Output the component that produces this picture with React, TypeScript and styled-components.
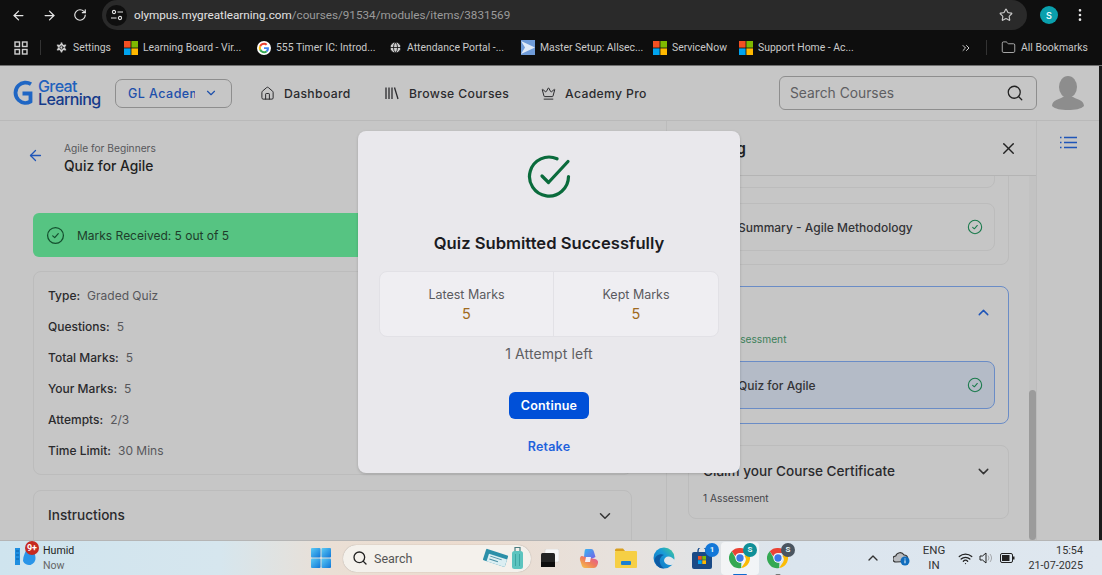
import React from "react";
import styled, { createGlobalStyle } from "styled-components";
import {
  ArrowLeft,
  ArrowRight,
  RotateCw,
  Star,
  Settings,
  Globe,
  ChevronsRight,
  Folder,
  ChevronDown,
  ChevronUp,
  Home,
  Crown,
  Search,
  X,
  Wifi,
  EllipsisVertical,
} from "lucide-react";

const GlobalStyle = createGlobalStyle`
  html, body { margin: 0; padding: 0; width: 1102px; height: 575px; overflow: hidden; background: #0f0f0f; }
  * { box-sizing: border-box; }
  svg { flex: none; }
`;

const Page = styled.div`
  width: 1102px;
  height: 575px;
  display: flex;
  flex-direction: column;
  overflow: hidden;
  font-family: Inter, "Liberation Sans", sans-serif;
`;

/* browser chrome */
const Toolbar = styled.div`
  height: 30px;
  background: #0f0f0f;
  display: flex;
  align-items: center;
  color: #e6e6e6;
  flex: none;
`;

const NavButtons = styled.div`
  width: 102px;
  flex: none;
  display: flex;
  align-items: center;
  gap: 16px;
  padding-left: 11px;
`;

const AddressBar = styled.div`
  width: 925px;
  height: 30px;
  border-radius: 15px;
  background: #2a2a2a;
  display: flex;
  align-items: center;
  padding: 0 14px 0 4px;
  flex: none;
`;

const SiteInfo = styled.div`
  width: 21px;
  height: 21px;
  border-radius: 50%;
  background: #0f0f0f;
  display: flex;
  align-items: center;
  justify-content: center;
  margin-right: 7px;
  flex: none;
`;

const Url = styled.div`
  font-family: Roboto, sans-serif;
  font-size: 11.7px;
  color: #9b9b9b;
  flex: 1;
  white-space: nowrap;
  span { color: #e3e3e3; }
`;

const ProfileDot = styled.div`
  width: 18px;
  height: 18px;
  border-radius: 50%;
  background: #0aa0ad;
  color: #e8fbff;
  font-size: 9px;
  font-weight: 600;
  display: flex;
  align-items: center;
  justify-content: center;
  margin-left: 13px;
  margin-right: 14px;
  flex: none;
`;

const Bookmarks = styled.div`
  height: 36px;
  background: #0e0e0e;
  border-bottom: 1px solid #6f6f6f;
  display: flex;
  align-items: center;
  padding-left: 14px;
  font-family: Roboto, sans-serif;
  font-size: 10.4px;
  color: #c9c9c9;
  white-space: nowrap;
  flex: none;
`;

const Divider = styled.div<{ $left: number; $right: number }>`
  width: 1px;
  height: 15px;
  background: #333;
  margin: 0 ${(p) => p.$right}px 0 ${(p) => p.$left}px;
  flex: none;
`;

const Bookmark = styled.div<{ $width: number }>`
  width: ${(p) => p.$width}px;
  flex: none;
  display: flex;
  align-items: center;
  gap: 5px;
`;

/* site */
const Site = styled.div`
  flex: 1;
  min-height: 0;
  display: flex;
  flex-direction: column;
  background: #c6c6c6;
  border-right: 3px solid #1b1b1b;
  color: #242427;
`;

const SiteHeader = styled.header`
  height: 55px;
  flex: none;
  border-bottom: 1px solid #b9b9b9;
  display: flex;
  align-items: center;
  padding-left: 12px;
`;

const Logo = styled.div`
  width: 103px;
  flex: none;
  display: flex;
  align-items: center;
  gap: 2px;
`;

const LogoText = styled.div`
  color: #1f62bd;
  font-size: 16px;
  font-weight: 500;
  line-height: 12px;
  letter-spacing: -0.6px;
  margin-top: -1px;
  span { display: block; color: #153a8a; margin-top: 1px; }
`;

const AcademySelect = styled.div`
  width: 117px;
  height: 29px;
  flex: none;
  border: 1px solid #8e8e8e;
  border-radius: 7px;
  display: flex;
  align-items: center;
  padding-left: 12px;
  color: #1e50ab;
  font-size: 12.5px;
  font-weight: 500;
  letter-spacing: 0.45px;
  margin-right: 28px;
`;

const AcademyLabel = styled.div`
  width: 67px;
  overflow: hidden;
  white-space: nowrap;
  margin-right: 9px;
`;

const NavLink = styled.div<{ $gap: number; $width: number }>`
  display: flex;
  align-items: center;
  gap: ${(p) => p.$gap}px;
  width: ${(p) => p.$width}px;
  flex: none;
  font-size: 12.2px;
  font-weight: 500;
  letter-spacing: 0.35px;
  color: #2b2b2e;
  white-space: nowrap;
`;

const SearchBox = styled.div`
  width: 258px;
  height: 34px;
  flex: none;
  margin-left: 118px;
  border: 1px solid #8e8e8e;
  border-radius: 6px;
  display: flex;
  align-items: center;
  justify-content: space-between;
  padding: 0 12px 0 10px;
  font-size: 13.8px;
  color: #5e5e62;
`;

const AvatarWrap = styled.div`
  margin-left: 15px;
  display: flex;
`;

const Content = styled.div`
  flex: 1;
  min-height: 0;
  display: flex;
  position: relative;
  overflow: hidden;
`;

const MainColumn = styled.main`
  width: 667px;
  flex: none;
  border-right: 1px solid #bcbcbc;
  padding: 0 34px 0 33px;
  display: flex;
  flex-direction: column;
  overflow: hidden;
`;

const PageHead = styled.div`
  height: 92px;
  flex: none;
  display: flex;
  padding-top: 20px;
`;

const BackSlot = styled.div`
  width: 31px;
  flex: none;
  padding-top: 6px;
  display: flex;
  justify-content: flex-start;
  align-items: flex-start;
  margin-left: -6px;
  margin-right: 6px;
`;

const Crumb = styled.div`
  font-size: 10.2px;
  line-height: 14px;
  color: #57575b;
`;

const PageTitle = styled.h1`
  margin: 2px 0 0;
  font-size: 13.8px;
  line-height: 19px;
  font-weight: 500;
  color: #1f1f22;
`;

const ResultBar = styled.div`
  height: 44px;
  flex: none;
  border-radius: 6px;
  background: #56c482;
  display: flex;
  align-items: center;
  gap: 12px;
  padding-left: 13px;
  font-size: 12px;
  color: #1e3d2b;
`;

const InfoCard = styled.section`
  margin-top: 14px;
  height: 204px;
  flex: none;
  border: 1px solid #bcbcbc;
  border-radius: 8px;
  padding: 8px 14px;
  display: flex;
  flex-direction: column;
`;

const InfoRow = styled.div`
  height: 31px;
  flex: none;
  display: flex;
  align-items: center;
  gap: 7px;
  font-size: 12px;
  color: #57575b;
  b { font-weight: 500; color: #2a2a2d; }
`;

const InstructionsCard = styled.section`
  margin-top: 15px;
  height: 70px;
  flex: none;
  border: 1px solid #bcbcbc;
  border-radius: 8px;
  padding: 16px 17px 0 14px;
  display: flex;
  justify-content: space-between;
  align-items: flex-start;
  font-size: 13.6px;
  font-weight: 500;
  color: #2a2a2d;
`;

const Panel = styled.aside`
  width: 370px;
  flex: none;
  display: flex;
  flex-direction: column;
  border-right: 1px solid #bcbcbc;
`;

const PanelHead = styled.div`
  height: 55px;
  flex: none;
  border-bottom: 1px solid #b4b4b4;
  display: flex;
  align-items: center;
  justify-content: space-between;
  padding: 0 18px 0 15px;
  font-size: 15px;
  font-weight: 600;
  color: #1f1f22;
`;

const PanelBody = styled.div`
  flex: 1;
  min-height: 0;
  display: flex;
  overflow: hidden;
`;

const ModuleList = styled.div`
  flex: 1;
  padding: 0 20px 0 21px;
  display: flex;
  flex-direction: column;
  gap: 21px;
  margin-top: -37px;
`;

const ModuleCard = styled.div<{ $active?: boolean }>`
  flex: none;
  border: 1px solid ${(p) => (p.$active ? "#6a8cc6" : "#bcbcbc")};
  border-radius: 8px;
  padding: 0 13px ${(p) => (p.$active ? "14px" : "13px")} 14px;
  display: flex;
  flex-direction: column;
  gap: 15px;
`;

const ModuleHead = styled.div`
  display: flex;
  flex-direction: column;
  padding-top: 15px;
  gap: 10px;
`;

const ModuleTitleRow = styled.div`
  display: flex;
  justify-content: space-between;
  align-items: center;
  height: 20px;
  font-size: 13.6px;
  font-weight: 500;
  color: #2a2a2d;
  padding-right: 3px;
`;

const ModuleNote = styled.div<{ $green?: boolean }>`
  font-size: 10.2px;
  line-height: 14px;
  color: ${(p) => (p.$green ? "#3c8059" : "#45454a")};
`;

const Lesson = styled.div<{ $active?: boolean }>`
  height: 48px;
  flex: none;
  border: 1px solid ${(p) => (p.$active ? "#6a8cc6" : "#bcbcbc")};
  background: ${(p) => (p.$active ? "#b4bbc7" : "transparent")};
  border-radius: 8px;
  display: flex;
  align-items: center;
  justify-content: space-between;
  padding: 0 11px 0 34px;
  font-size: 12px;
  font-weight: 500;
  color: #333336;
`;

const ScrollTrack = styled.div`
  width: 7px;
  flex: none;
  background: #c2c2c2;
  display: flex;
  flex-direction: column;
  justify-content: flex-end;
`;

const ScrollThumb = styled.div`
  height: 150px;
  border-radius: 4px;
  background: #9b9b9b;
`;

const Rail = styled.div`
  flex: 1;
  display: flex;
  justify-content: center;
  padding-top: 15px;
  align-items: flex-start;
`;

/* modal */
const Modal = styled.div`
  position: absolute;
  left: 358px;
  top: 10px;
  width: 382px;
  height: 342px;
  border-radius: 8px;
  background: #e9e8ec;
  box-shadow: 0 1px 3px rgba(0, 0, 0, 0.18);
  display: flex;
  flex-direction: column;
  align-items: center;
  padding: 24px 21px 0;
`;

const ModalTitle = styled.h2`
  margin: 32px 0 0;
  font-size: 16.6px;
  line-height: 24px;
  font-weight: 600;
  color: #1b1b1f;
`;

const StatsBox = styled.div`
  margin-top: 16px;
  width: 340px;
  height: 66px;
  flex: none;
  background: #efeef2;
  border: 1px solid #e2e1e6;
  border-radius: 8px;
  display: grid;
  grid-template-columns: 174px 1fr;
`;

const Stat = styled.div<{ $divided?: boolean }>`
  display: flex;
  flex-direction: column;
  align-items: center;
  justify-content: center;
  gap: 2px;
  border-right: ${(p) => (p.$divided ? "1px solid #e2e1e6" : "none")};
  font-size: 12.5px;
  line-height: 16px;
  color: #5a5a5e;
  b { font-weight: 400; font-size: 14.5px; line-height: 17px; color: #a06a20; }
`;

const AttemptsLeft = styled.div`
  margin-top: 7px;
  font-size: 14px;
  line-height: 20px;
  letter-spacing: 0.1px;
  color: #5e5e62;
`;

const ContinueButton = styled.button`
  margin-top: 28px;
  width: 80px;
  height: 27px;
  border: none;
  border-radius: 6px;
  background: #0050d8;
  color: #fff;
  font-family: inherit;
  font-size: 12.5px;
  font-weight: 600;
  letter-spacing: 0.2px;
`;

const RetakeLink = styled.div`
  margin-top: 20px;
  font-size: 12.5px;
  line-height: 16px;
  font-weight: 600;
  letter-spacing: 0.2px;
  color: #1f62dc;
`;

/* taskbar */
const Taskbar = styled.footer`
  height: 35px;
  flex: none;
  border-top: 1px solid #b5b5b5;
  background: linear-gradient(90deg, #cfe4ee 0%, #d6e6ee 20%, #eadfd5 30%, #ecdccf 42%, #e6e2df 58%, #dbe5ee 72%, #dfe7ef 100%);
  display: flex;
  align-items: center;
  position: relative;
  font-family: Roboto, sans-serif;
  font-size: 11.5px;
  color: #444;
`;

const Weather = styled.div`
  width: 311px;
  flex: none;
  display: flex;
  align-items: center;
  gap: 7px;
  padding-left: 15px;
  position: relative;
`;

const WeatherText = styled.div`
  font-size: 10.6px;
  line-height: 15px;
  color: #222;
  span { display: block; color: #666; }
`;

const WeatherBadge = styled.div`
  position: absolute;
  left: 25px;
  top: -2px;
  width: 14px;
  height: 14px;
  border-radius: 50%;
  background: #c62a20;
  color: #fff;
  font-size: 9px;
  font-weight: 700;
  display: flex;
  align-items: center;
  justify-content: center;
`;

const TaskSearch = styled.div`
  width: 188px;
  height: 27px;
  flex: none;
  margin-left: 12px;
  border-radius: 14px;
  background: #f4f1ec;
  box-shadow: 0 0 1px rgba(0, 0, 0, 0.35);
  display: flex;
  align-items: center;
  gap: 6px;
  padding: 0 4px 0 9px;
  font-size: 12.5px;
  color: #555;
`;

const TaskSearchLabel = styled.div`
  flex: 1;
`;

const AppSlot = styled.div<{ $active?: boolean }>`
  width: 38px;
  height: 33px;
  flex: none;
  border-radius: 4px;
  background: ${(p) => (p.$active ? "rgba(255,255,255,0.6)" : "transparent")};
  display: flex;
  align-items: center;
  justify-content: center;
  position: relative;
`;

const CountBadge = styled.div<{ $color: string }>`
  position: absolute;
  right: 2px;
  top: 1px;
  width: 14px;
  height: 14px;
  border-radius: 50%;
  background: ${(p) => p.$color};
  color: #e4f4f6;
  font-size: 8px;
  font-weight: 700;
  display: flex;
  align-items: center;
  justify-content: center;
`;

const ActiveMark = styled.div<{ $color: string; $width: number }>`
  position: absolute;
  left: 50%;
  bottom: -1px;
  transform: translateX(-50%);
  width: ${(p) => p.$width}px;
  height: 2px;
  border-radius: 1px;
  background: ${(p) => p.$color};
`;

const Tray = styled.div`
  margin-left: 68px;
  display: flex;
  align-items: center;
  flex: none;
`;

const OneDriveSlot = styled.div`
  margin-left: 12px;
  display: flex;
`;

const LangBlock = styled.div`
  width: 28px;
  margin: 0 10px 0 10px;
  text-align: center;
  line-height: 15px;
  color: #333;
`;

const TrayIcons = styled.div`
  display: flex;
  align-items: center;
  gap: 6px;
`;

const Clock = styled.div`
  margin-left: 8px;
  width: 60px;
  text-align: right;
  line-height: 15px;
  font-size: 10.8px;
  color: #333;
`;

/* drawings */
const MsLogo = () => (
  <svg width="14" height="14" viewBox="0 0 14 14">
    <rect width="6.6" height="6.6" fill="#f25022" />
    <rect x="7.4" width="6.6" height="6.6" fill="#7fba00" />
    <rect y="7.4" width="6.6" height="6.6" fill="#00a4ef" />
    <rect x="7.4" y="7.4" width="6.6" height="6.6" fill="#ffb900" />
  </svg>
);

const GoogleLogo = () => (
  <svg width="14" height="14" viewBox="0 0 48 48">
    <circle cx="24" cy="24" r="24" fill="#fff" />
    <path fill="#ea4335" d="M24 13c3 0 5 1 6.700 2.600l5-5C32.500 7.700 28.700 6 24 6 17 6 11 10 8 16l5.800 4.500C15.200 16.200 19.200 13 24 13z" />
    <path fill="#4285f4" d="M41 24.500c0-1.300-.1-2.300-.3-3.500H24v6.600h9.600c-.4 2.300-1.700 4.200-3.700 5.500l5.700 4.400C39 34.400 41 29.900 41 24.500z" />
    <path fill="#fbbc05" d="M13.800 27.500c-.8-2.300-.8-4.700 0-7L8 16c-2.400 5-2.400 10.900 0 16z" />
    <path fill="#34a853" d="M24 42c4.800 0 8.700-1.600 11.600-4.400l-5.700-4.400c-1.600 1.100-3.600 1.800-5.900 1.800-4.800 0-8.800-3.200-10.200-7.500L8 32c3 6 9 10 16 10z" />
  </svg>
);

const MasterIcon = () => (
  <svg width="14" height="15" viewBox="0 0 14 15">
    <rect width="14" height="15" fill="#6f9bd8" />
    <path d="M0 1 L14 7.500 L0 14 L4 7.500 Z" fill="#dfe9f7" />
  </svg>
);

const ChromeLogo = () => (
  <svg width="22" height="22" viewBox="0 0 48 48">
    <path fill="#ea4335" d="M24 2a22 22 0 0 1 19 11H24a11 11 0 0 0-10.400 7.400L6 9.500A22 22 0 0 1 24 2z" />
    <path fill="#fbbc05" d="M43 13a22 22 0 0 1-16.500 32.900L35 33a11 11 0 0 0-1.500-13.500z" />
    <path fill="#34a853" d="M6 9.500l8.500 14.700A11 11 0 0 0 27 34.500L26.500 45.900A22 22 0 0 1 6 9.500z" />
    <circle cx="24" cy="24" r="10" fill="#fff" />
    <circle cx="24" cy="24" r="8" fill="#3b78e7" />
  </svg>
);

const GreatLearningMark = () => (
  <svg width="24" height="26" viewBox="0 0 24 26" fill="none">
    <path d="M19 4.200C15.500 2 10 2 6.500 5.500 2.500 9.500 2.500 16 6.500 20c3.500 3.500 8.500 3.500 12 1.500V13.500h-8" stroke="#1f66c4" strokeWidth="3.800" />
  </svg>
);

const Avatar = () => (
  <svg width="32" height="34" viewBox="0 0 32 34">
    <ellipse cx="16" cy="11" rx="9" ry="11" fill="#8d8d8d" />
    <path d="M0 30c0-6 8-7 11-9h10c3 2 11 3 11 9-3 3-9 4-16 4S3 33 0 30z" fill="#8d8d8d" />
  </svg>
);

const LibraryIcon = () => (
  <svg width="14" height="14" viewBox="0 0 14 14" fill="none" stroke="#2b2b2e" strokeWidth="1.300">
    <path d="M1 1.500V13M4 1.500V13M7 1.500V13M9.500 1.500 13 13" />
  </svg>
);

const CheckBadge = ({ size, color }: { size: number; color: string }) => (
  <svg width={size} height={size} viewBox="0 0 24 24" fill="none" stroke={color} strokeWidth="1.600" strokeLinecap="round" strokeLinejoin="round">
    <circle cx="12" cy="12" r="10" />
    <path d="M8.500 12.500l2.500 2.200 4.500-5" />
  </svg>
);

const SuccessMark = () => (
  <svg width="44" height="44" viewBox="0 0 44 44" fill="none" stroke="#0a6b3c" strokeWidth="3.200" strokeLinecap="round" strokeLinejoin="round">
    <path d="M30 3.800A19.500 19.500 0 1 0 41.500 21.500" />
    <path d="M15 21l6.500 6.500L41 6.500" />
  </svg>
);

const ListIcon = () => (
  <svg width="17" height="13" viewBox="0 0 17 13" fill="none" stroke="#1f55b8" strokeWidth="1.500">
    <path d="M0 1.500h1.500M0 6.500h1.500M0 11.500h1.500M4 1.500h13M4 6.500h13M4 11.500h13" />
  </svg>
);

const SiteInfoIcon = () => (
  <svg width="12" height="12" viewBox="0 0 12 12" fill="none" stroke="#e3e3e3" strokeWidth="1.100">
    <circle cx="3" cy="3" r="1.600" />
    <path d="M6.500 3H12M0 9h5.500" />
    <circle cx="9" cy="9" r="1.600" />
  </svg>
);

const AppsGrid = () => (
  <svg width="14" height="14" viewBox="0 0 14 14" fill="none" stroke="#cfcfcf" strokeWidth="1.400">
    <rect x="1" y="1" width="4.500" height="4.500" />
    <rect x="8.500" y="1" width="4.500" height="4.500" />
    <rect x="1" y="8.500" width="4.500" height="4.500" />
    <rect x="8.500" y="8.500" width="4.500" height="4.500" />
  </svg>
);

const HumidIcon = () => (
  <svg width="21" height="26" viewBox="0 0 21 26">
    <rect x="0" y="3" width="5" height="17" fill="#1f8fe0" />
    <path d="M1 6h3M1 10h3M1 14h3" stroke="#0b5fa8" strokeWidth="1" />
    <path d="M14 0c4 5 6.500 8.500 6.500 13A6.500 6.500 0 0 1 8 16c0-5 2.500-10 6-16z" fill="#2a95e8" />
  </svg>
);

const WindowsLogo = () => (
  <svg width="20" height="20" viewBox="0 0 20 20">
    <defs>
      <linearGradient id="win" x1="0" y1="0" x2="1" y2="1">
        <stop offset="0" stopColor="#5ccbf5" />
        <stop offset="1" stopColor="#0f76d8" />
      </linearGradient>
    </defs>
    <rect width="9.500" height="9.500" rx="1" fill="url(#win)" />
    <rect x="10.500" width="9.500" height="9.500" rx="1" fill="url(#win)" />
    <rect y="10.500" width="9.500" height="9.500" rx="1" fill="url(#win)" />
    <rect x="10.500" y="10.500" width="9.500" height="9.500" rx="1" fill="url(#win)" />
  </svg>
);

const TravelArt = () => (
  <svg width="44" height="24" viewBox="0 0 44 24">
    <g transform="rotate(18 13 12)">
      <rect x="1" y="6" width="23" height="12" rx="1" fill="#2b8fa8" />
      <rect x="5" y="10" width="19" height="8" fill="#dbeef2" />
      <path d="M7 12h12M7 15h9" stroke="#4a8fa3" strokeWidth="1" />
    </g>
    <rect x="29" y="5" width="11" height="18" rx="2.500" fill="#5cc4bf" />
    <path d="M32 5V1.500h5V5" fill="none" stroke="#4a7d80" strokeWidth="1.200" />
    <path d="M32.500 8v12M36.500 8v12" stroke="#3da5a2" strokeWidth="1" />
  </svg>
);

const TaskViewIcon = () => (
  <svg width="18" height="18" viewBox="0 0 18 18">
    <rect x="4" y="0" width="14" height="13" rx="1.500" fill="#f7f7f7" stroke="#ccc" strokeWidth="0.500" />
    <rect x="0" y="4" width="14" height="14" rx="1.500" fill="#242424" />
    <rect x="0" y="13" width="14" height="5" fill="#0d0d0d" />
  </svg>
);

const CopilotIcon = () => (
  <svg width="21" height="21" viewBox="0 0 21 21">
    <defs>
      <linearGradient id="cpA" x1="0" y1="0" x2="1" y2="1">
        <stop offset="0" stopColor="#38b6f0" />
        <stop offset="1" stopColor="#7a5be6" />
      </linearGradient>
      <linearGradient id="cpB" x1="0" y1="1" x2="1" y2="0">
        <stop offset="0" stopColor="#f7c948" />
        <stop offset="0.5" stopColor="#ee7d5c" />
        <stop offset="1" stopColor="#e04fa8" />
      </linearGradient>
    </defs>
    <path d="M8 1h5c1.800 0 2.500 1.200 3 3l1.500 5L11 12 6 9l.5-5C6.800 2 7 1 8 1z" fill="url(#cpA)" />
    <path d="M4 8l7 2 6 1c2 .5 3.500 2 3 4-.5 2-1.500 5-4 5H7c-2 0-3-1.500-3.500-3.500L2 12c-.5-2 .5-4 2-4z" fill="url(#cpB)" />
    <path d="M8 9h5l-1 5H7z" fill="#f4eef6" />
  </svg>
);

const ExplorerIcon = () => (
  <svg width="22" height="20" viewBox="0 0 22 20">
    <path d="M0 2a1.500 1.500 0 0 1 1.500-1.500H8l2 2.500H0z" fill="#d99f1f" />
    <rect y="3" width="22" height="17" rx="1" fill="#f6cf45" />
    <rect x="6" y="13" width="10" height="4" rx="1" fill="#1b7fd0" />
  </svg>
);

const EdgeIcon = () => (
  <svg width="22" height="22" viewBox="0 0 22 22">
    <defs>
      <linearGradient id="edgeA" x1="0" y1="1" x2="1" y2="0">
        <stop offset="0" stopColor="#0f6fc0" />
        <stop offset="0.6" stopColor="#1a9bd8" />
        <stop offset="1" stopColor="#49d08a" />
      </linearGradient>
    </defs>
    <circle cx="11" cy="11" r="10.500" fill="url(#edgeA)" />
    <path d="M11 14c0-3 2-4.500 4.500-4.500 2.500 0 4 1.500 6 3.500 0 2-1 3.500-2 4.500-3 1.500-7.500 0-8.500-3.500z" fill="#e0e5ea" />
    <path d="M1.500 13c1-5 6-7 9.500-5-3 1-5 4-4 8 .5 2 2 4 4 5.500-5 0-8.500-3.500-9.500-8.500z" fill="#0c5aa3" />
  </svg>
);

const StoreIcon = () => (
  <svg width="20" height="21" viewBox="0 0 20 21">
    <path d="M6 5V3a4 4 0 0 1 8 0v2" fill="none" stroke="#1b4f8f" strokeWidth="1.400" />
    <rect y="4" width="20" height="17" rx="2" fill="#1a4a86" />
    <rect x="6" y="8" width="3.700" height="3.700" fill="#f25022" />
    <rect x="10.300" y="8" width="3.700" height="3.700" fill="#7fba00" />
    <rect x="6" y="12.300" width="3.700" height="3.700" fill="#00a4ef" />
    <rect x="10.300" y="12.300" width="3.700" height="3.700" fill="#ffb900" />
  </svg>
);

const OneDriveIcon = () => (
  <svg width="17" height="15" viewBox="0 0 17 15">
    <path d="M3 11a3 3 0 0 1-.3-6A4.500 4.500 0 0 1 11 4a3.500 3.500 0 0 1 2 6.500z" fill="#b9bcc0" stroke="#333" strokeWidth="1.100" />
    <circle cx="12" cy="10" r="4.500" fill="#0f6cbd" />
    <rect x="11.500" y="9.300" width="1" height="3" fill="#fff" />
    <rect x="11.500" y="7.500" width="1" height="1" fill="#fff" />
  </svg>
);

const VolumeIcon = () => (
  <svg width="15" height="14" viewBox="0 0 15 14" fill="none">
    <path d="M1 5h2.500L7 2v10L3.500 9H1z" stroke="#222" strokeWidth="1" strokeLinejoin="round" />
    <path d="M9 4.500a4 4 0 0 1 0 5M11 3a6.500 6.500 0 0 1 0 8" stroke="#a5a8ac" strokeWidth="1" />
  </svg>
);

const BatteryIcon = () => (
  <svg width="15" height="10" viewBox="0 0 15 10">
    <rect x="0.500" y="0.500" width="12" height="9" rx="1.500" fill="none" stroke="#222" />
    <rect x="2" y="2" width="7.500" height="6" fill="#222" />
    <rect x="13" y="3.500" width="1.500" height="3" fill="#222" />
  </svg>
);

const bookmarks = [
  { label: "Settings", width: 69, icon: <Settings size={13} fill="#cfcfcf" color="#0e0e0e" strokeWidth={1.5} /> },
  { label: "Learning Board - Vir...", width: 133, icon: <MsLogo /> },
  { label: "555 Timer IC: Introd...", width: 132, icon: <GoogleLogo /> },
  { label: "Attendance Portal -...", width: 132, icon: <Globe size={13} color="#0e0e0e" fill="#cfcfcf" strokeWidth={1.5} /> },
  { label: "Master Setup: Allsec...", width: 132, icon: <MasterIcon /> },
  { label: "ServiceNow", width: 86, icon: <MsLogo /> },
  { label: "Support Home - Ac...", width: 221, icon: <MsLogo /> },
];

const quizFacts = [
  ["Type:", "Graded Quiz"],
  ["Questions:", "5"],
  ["Total Marks:", "5"],
  ["Your Marks:", "5"],
  ["Attempts:", "2/3"],
  ["Time Limit:", "30 Mins"],
];

const App: React.FC = () => {
  return (
    <Page>
      <GlobalStyle />
      <Toolbar>
        <NavButtons>
          <ArrowLeft size={15} />
          <ArrowRight size={15} />
          <RotateCw size={14} />
        </NavButtons>
        <AddressBar>
          <SiteInfo>
            <SiteInfoIcon />
          </SiteInfo>
          <Url>
            <span>olympus.mygreatlearning.com</span>/courses/91534/modules/items/3831569
          </Url>
          <Star size={14} color="#c8c8c8" />
        </AddressBar>
        <ProfileDot>S</ProfileDot>
        <EllipsisVertical size={16} />
      </Toolbar>

      <Bookmarks>
        <AppsGrid />
        <Divider $left={12} $right={14} />
        {bookmarks.map((b) => (
          <Bookmark key={b.label} $width={b.width}>
            {b.icon}
            {b.label}
          </Bookmark>
        ))}
        <ChevronsRight size={12} color="#cfcfcf" />
        <Divider $left={14} $right={14} />
        <Bookmark $width={90}>
          <Folder size={15} color="#c9c9c9" strokeWidth={1.3} />
          All Bookmarks
        </Bookmark>
      </Bookmarks>

      <Site>
        <SiteHeader>
          <Logo>
            <GreatLearningMark />
            <LogoText>
              Great
              <span>Learning</span>
            </LogoText>
          </Logo>
          <AcademySelect>
            <AcademyLabel>GL Academy</AcademyLabel>
            <ChevronDown size={14} />
          </AcademySelect>
          <NavLink $gap={9} $width={125}>
            <Home size={15} strokeWidth={1.6} />
            Dashboard
          </NavLink>
          <NavLink $gap={10} $width={156}>
            <LibraryIcon />
            Browse Courses
          </NavLink>
          <NavLink $gap={9} $width={120}>
            <Crown size={15} strokeWidth={1.6} />
            Academy Pro
          </NavLink>
          <SearchBox>
            Search Courses
            <Search size={18} color="#222" strokeWidth={1.7} />
          </SearchBox>
          <AvatarWrap>
            <Avatar />
          </AvatarWrap>
        </SiteHeader>

        <Content>
          <MainColumn>
            <PageHead>
              <BackSlot>
                <ArrowLeft size={17} color="#1f55b8" strokeWidth={1.8} />
              </BackSlot>
              <div>
                <Crumb>Agile for Beginners</Crumb>
                <PageTitle>Quiz for Agile</PageTitle>
              </div>
            </PageHead>
            <ResultBar>
              <CheckBadge size={19} color="#14502f" />
              Marks Received: 5 out of 5
            </ResultBar>
            <InfoCard>
              {quizFacts.map(([label, value]) => (
                <InfoRow key={label}>
                  <b>{label}</b>
                  {value}
                </InfoRow>
              ))}
            </InfoCard>
            <InstructionsCard>
              Instructions
              <ChevronDown size={18} color="#333" />
            </InstructionsCard>
          </MainColumn>

          <Panel>
            <PanelHead>
              Learning
              <X size={19} color="#222" strokeWidth={1.8} />
            </PanelHead>
            <PanelBody>
              <ModuleList>
                <ModuleCard>
                  <Lesson />
                  <Lesson>
                    Summary - Agile Methodology
                    <CheckBadge size={16} color="#1a7a4c" />
                  </Lesson>
                </ModuleCard>
                <ModuleCard $active>
                  <ModuleHead>
                    <ModuleTitleRow>
                      Quiz
                      <ChevronUp size={17} color="#1f55b8" />
                    </ModuleTitleRow>
                    <ModuleNote $green>Quiz Assessment</ModuleNote>
                  </ModuleHead>
                  <Lesson $active>
                    Quiz for Agile
                    <CheckBadge size={16} color="#1a7a4c" />
                  </Lesson>
                </ModuleCard>
                <ModuleCard>
                  <ModuleHead>
                    <ModuleTitleRow>
                      Claim your Course Certificate
                      <ChevronDown size={17} color="#333" />
                    </ModuleTitleRow>
                    <ModuleNote>1 Assessment</ModuleNote>
                  </ModuleHead>
                </ModuleCard>
              </ModuleList>
              <ScrollTrack>
                <ScrollThumb />
              </ScrollTrack>
            </PanelBody>
          </Panel>

          <Rail>
            <ListIcon />
          </Rail>

          <Modal>
            <SuccessMark />
            <ModalTitle>Quiz Submitted Successfully</ModalTitle>
            <StatsBox>
              <Stat $divided>
                Latest Marks
                <b>5</b>
              </Stat>
              <Stat>
                Kept Marks
                <b>5</b>
              </Stat>
            </StatsBox>
            <AttemptsLeft>1 Attempt left</AttemptsLeft>
            <ContinueButton>Continue</ContinueButton>
            <RetakeLink>Retake</RetakeLink>
          </Modal>
        </Content>
      </Site>

      <Taskbar>
        <Weather>
          <HumidIcon />
          <WeatherBadge>9+</WeatherBadge>
          <WeatherText>
            Humid
            <span>Now</span>
          </WeatherText>
        </Weather>
        <WindowsLogo />
        <TaskSearch>
          <Search size={16} color="#222" strokeWidth={2} />
          <TaskSearchLabel>Search</TaskSearchLabel>
          <TravelArt />
        </TaskSearch>
        <AppSlot>
          <TaskViewIcon />
        </AppSlot>
        <AppSlot>
          <CopilotIcon />
        </AppSlot>
        <AppSlot>
          <ExplorerIcon />
        </AppSlot>
        <AppSlot>
          <EdgeIcon />
        </AppSlot>
        <AppSlot>
          <StoreIcon />
          <CountBadge $color="#1277d8">1</CountBadge>
        </AppSlot>
        <AppSlot $active>
          <ChromeLogo />
          <CountBadge $color="#0f8f98">S</CountBadge>
          <ActiveMark $color="#0f6cd0" $width={14} />
        </AppSlot>
        <AppSlot>
          <ChromeLogo />
          <CountBadge $color="#4a5560">S</CountBadge>
          <ActiveMark $color="#777" $width={5} />
        </AppSlot>
        <Tray>
          <ChevronUp size={16} color="#333" />
          <OneDriveSlot>
            <OneDriveIcon />
          </OneDriveSlot>
          <LangBlock>
            ENG
            <br />
            IN
          </LangBlock>
          <TrayIcons>
            <Wifi size={15} color="#222" />
            <VolumeIcon />
            <BatteryIcon />
          </TrayIcons>
          <Clock>
            15:54
            <br />
            21-07-2025
          </Clock>
        </Tray>
      </Taskbar>
    </Page>
  );
};

export default App;
